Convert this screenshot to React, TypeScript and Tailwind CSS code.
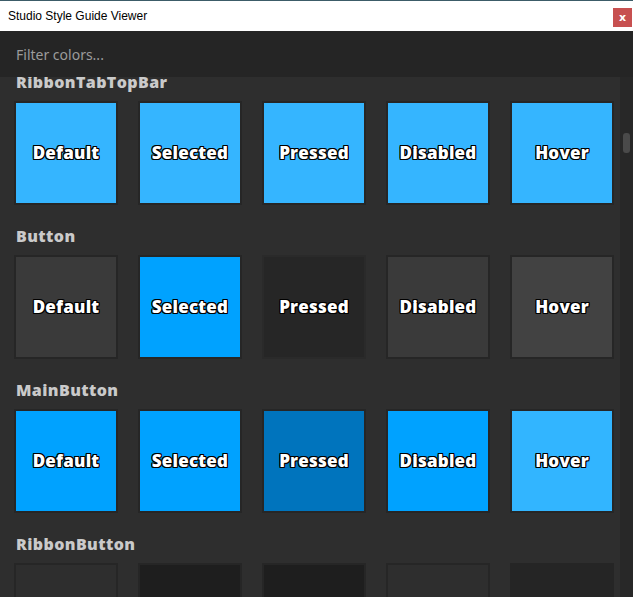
import React from "react";

type Tile = { label: string; fill: string; border: string };
type Section = { name: string; tiles: Tile[] };

const B = "#262626";
const sections: Section[] = [
  {
    name: "RibbonTabTopBar",
    tiles: ["Default", "Selected", "Pressed", "Disabled", "Hover"].map((l) => ({ label: l, fill: "#35b5ff", border: B })),
  },
  {
    name: "Button",
    tiles: [
      { label: "Default", fill: "#3a3a3a", border: B },
      { label: "Selected", fill: "#00a2ff", border: B },
      { label: "Pressed", fill: "#262626", border: "#2a2a2a" },
      { label: "Disabled", fill: "#3a3a3a", border: B },
      { label: "Hover", fill: "#424242", border: B },
    ],
  },
  {
    name: "MainButton",
    tiles: [
      { label: "Default", fill: "#00a2ff", border: B },
      { label: "Selected", fill: "#00a2ff", border: B },
      { label: "Pressed", fill: "#0074bd", border: B },
      { label: "Disabled", fill: "#00a2ff", border: B },
      { label: "Hover", fill: "#32b5ff", border: B },
    ],
  },
  {
    name: "RibbonButton",
    tiles: [
      { label: "Default", fill: "#2e2e2e", border: B },
      { label: "Selected", fill: "#1e1e1e", border: B },
      { label: "Pressed", fill: "#1e1e1e", border: B },
      { label: "Disabled", fill: "#2e2e2e", border: B },
      { label: "Hover", fill: "#252525", border: "#252525" },
    ],
  },
];

export default function App() {
  return (
    <div className="w-[633px] h-[597px] overflow-hidden flex flex-col bg-[#2e2e2e]">
      <div className="h-[31px] shrink-0 bg-white border-t border-[#3c5c68] flex items-center justify-between">
        <span className="pl-2 text-[12px] text-black font-['Liberation_Sans',sans-serif]">Studio Style Guide Viewer</span>
        <div className="w-[19px] h-[19px] mr-[1px] mt-[2px] bg-[#c75050] flex items-center justify-center text-white text-[11px] font-bold leading-none font-['DejaVu_Sans',sans-serif]">
          x
        </div>
      </div>
      <div className="h-[46px] shrink-0 bg-[#252525] flex items-center pl-4">
        <span className="text-[14px] text-[#9c9c9c] font-['Noto_Sans',sans-serif]">Filter colors...</span>
      </div>
      <div className="flex-1 flex min-h-0">
        <div className="flex-1 overflow-hidden">
          <div className="-mt-[7px] flex flex-col gap-[19px]">
            {sections.map((s) => (
              <div key={s.name} className="flex flex-col">
                <div className="h-5 leading-[24px] pl-4 text-[16px] font-extrabold text-[#cacaca] tracking-[0.4px] font-['Open_Sans',sans-serif]">
                  {s.name}
                </div>
                <div className="mt-[11px] pl-[14px] flex gap-5">
                  {s.tiles.map((t, i) => (
                    <div
                      key={i}
                      className="w-[104px] h-[104px] border-2 flex items-center justify-center shrink-0"
                      style={{ background: t.fill, borderColor: t.border }}
                    >
                      {s.name !== "RibbonButton" && (
                        <span className="text-white text-[17px] font-extrabold tracking-[0.2px] font-['Open_Sans',sans-serif] [text-shadow:1px_0_0_#000,-1px_0_0_#000,0_1px_0_#000,0_-1px_0_#000,1px_1px_0_#000,-1px_-1px_0_#000,1px_-1px_0_#000,-1px_1px_0_#000]">
                          {t.label}
                        </span>
                      )}
                    </div>
                  ))}
                </div>
              </div>
            ))}
          </div>
        </div>
        <div className="w-[13px] shrink-0 bg-[#282828] relative">
          <div className="absolute left-[3px] top-[56px] w-[7px] h-[20px] rounded-[3px] bg-[#4a4a4a]" />
        </div>
      </div>
    </div>
  );
}
